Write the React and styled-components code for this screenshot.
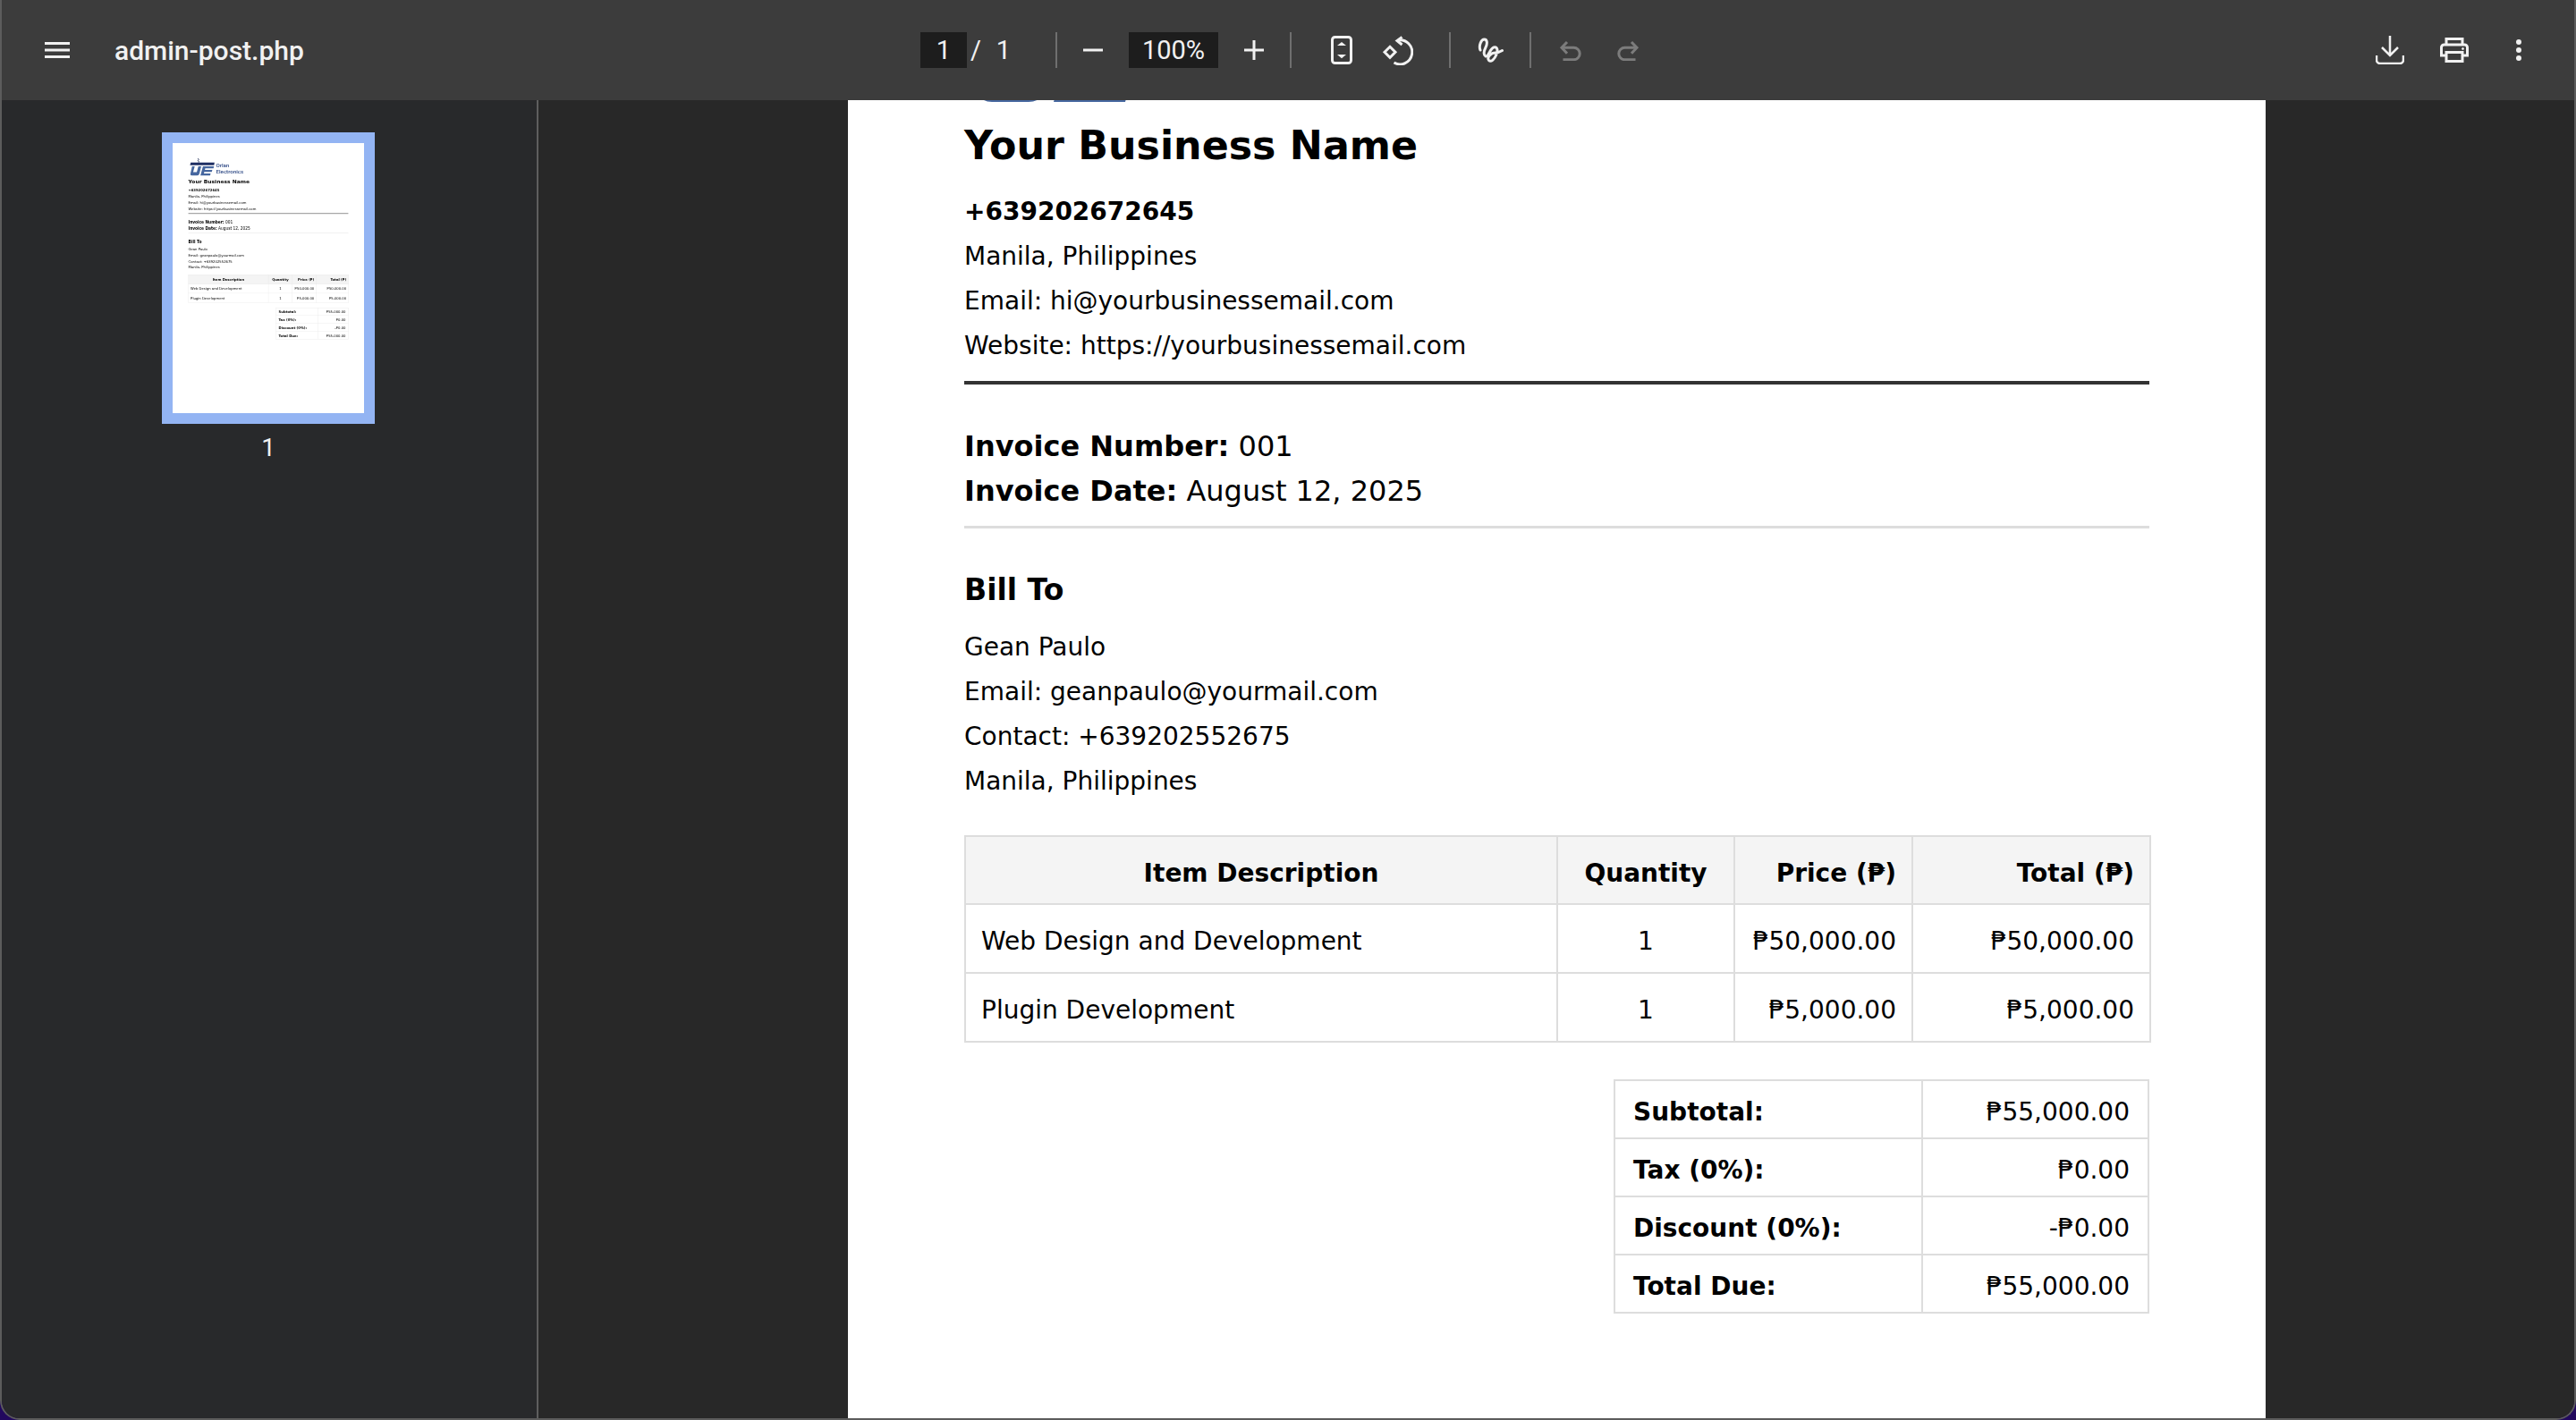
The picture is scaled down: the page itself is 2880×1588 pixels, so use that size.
import styled, { createGlobalStyle } from "styled-components";

const GlobalStyle = createGlobalStyle`
  html, body {
    margin: 0;
    padding: 0;
    background: #22085e;
    overflow: hidden;
  }
  * { box-sizing: border-box; }
`;

const Viewer = styled.div`
  width: 2880px;
  height: 1588px;
  display: flex;
  flex-direction: column;
  overflow: hidden;
  border: 2px solid #5c5c5c;
  border-top: 0;
  border-radius: 0 0 22px 22px;
`;

const Toolbar = styled.header`
  flex: 0 0 112px;
  display: flex;
  align-items: center;
  background: #3c3c3c;
  color: #f1f1f1;
  font-family: Roboto, "Liberation Sans", sans-serif;
`;

const ToolbarLeft = styled.div`
  flex: 0 0 1027px;
  display: flex;
  align-items: center;
  padding-left: 48px;
`;

const Title = styled.span`
  margin-left: 50px;
  font-size: 30px;
  font-weight: 500;
`;

const ToolbarCenter = styled.div`
  display: flex;
  align-items: center;
`;

const ToolbarRight = styled.div`
  margin-left: auto;
  display: flex;
  align-items: center;
  gap: 32px;
  padding-right: 42px;
`;

const ToolGroup = styled.div`
  display: flex;
  align-items: center;
  gap: ${(p) => p.$gap || 0}px;
  padding-left: ${(p) => p.$left || 0}px;
  padding-right: ${(p) => p.$right || 0}px;
`;

const Field = styled.span`
  width: ${(p) => p.$width}px;
  height: 40px;
  display: flex;
  align-items: center;
  justify-content: center;
  background: #1d1d1d;
  font-size: 29px;
`;

const PageText = styled.span`
  font-size: 29px;
  width: ${(p) => p.$width}px;
  text-align: center;
`;

const Divider = styled.span`
  flex: 0 0 2px;
  height: 40px;
  background: #6f6f6f;
`;

const IconButton = styled.span`
  width: 40px;
  height: 40px;
  display: flex;
  align-items: center;
  justify-content: center;
  color: ${(p) => (p.$disabled ? "#7c7c7c" : "#f1f1f1")};
`;

const Body = styled.div`
  flex: 1;
  display: flex;
  min-height: 0;
`;

const Sidebar = styled.aside`
  flex: 0 0 600px;
  display: flex;
  flex-direction: column;
  align-items: center;
  padding: 36px 2px 0 0;
  background: #28292b;
  border-right: 2px solid #5e5e5e;
`;

const ThumbFrame = styled.div`
  width: 238px;
  height: 326px;
  border: 12px solid #93b4f3;
  background: #fff;
  overflow: hidden;
`;

const ThumbScale = styled.div`
  width: 1585px;
  transform: scale(0.135);
  transform-origin: top left;
  filter: blur(2.5px);
`;

const ThumbLabel = styled.div`
  margin-top: 10px;
  color: #f1f1f1;
  font-family: Roboto, "Liberation Sans", sans-serif;
  font-size: 28px;
`;

const Main = styled.main`
  flex: 1;
  min-width: 0;
  overflow: hidden;
  background: #282828;
  padding-left: 346px;
`;

const MainPage = styled.div`
  width: 1585px;
  margin-top: -268px;
`;

const Page = styled.article`
  width: 1585px;
  height: 2240px;
  background: #fff;
  color: #000;
  padding: 126px 130px 0;
  font-family: "DejaVu Sans", Verdana, sans-serif;
  font-size: 28px;
  line-height: 50px;
`;

const Logo = styled.div`
  display: flex;
  height: 144px;
`;

const LogoText = styled.div`
  padding-top: 36px;
  color: #2f4a86;
  font-family: Roboto, "Liberation Sans", sans-serif;
  font-size: 46px;
  font-weight: 500;
  line-height: 50px;
`;

const BusinessName = styled.h1`
  margin: 22px 0 22px;
  font-size: 44.3px;
  line-height: 54px;
  font-weight: 700;
`;

const Line = styled.p`
  margin: 0;
  font-size: ${(p) => p.$size || 28}px;
  font-weight: ${(p) => (p.$bold ? 700 : 400)};
`;

const Rule = styled.hr`
  margin: ${(p) => p.$top}px 0 ${(p) => p.$bottom}px;
  border: 0;
  height: ${(p) => p.$size}px;
  background: ${(p) => p.$color};
`;

const Subheading = styled.h2`
  margin: 0 0 19px;
  font-size: 33px;
  line-height: 40px;
  font-weight: 700;
`;

const Table = styled.table`
  border-collapse: collapse;
  table-layout: fixed;
  width: ${(p) => p.$width}px;
  margin: ${(p) => p.$top}px 0 0 auto;
`;

const HeadCell = styled.th`
  width: ${(p) => p.$width || "auto"};
  height: 76px;
  padding: 8px 17px 0;
  border: 2px solid #ddd;
  background: #f4f4f4;
  font-weight: 700;
  text-align: ${(p) => p.$align || "center"};
`;

const Cell = styled.td`
  height: ${(p) => p.$height || 77}px;
  padding: 6px ${(p) => p.$pad || 17}px 0;
  border: 2px solid #ddd;
  font-weight: ${(p) => (p.$bold ? 700 : 400)};
  text-align: ${(p) => p.$align || "left"};
  width: ${(p) => p.$width || "auto"};
`;

const items = [
  { name: "Web Design and Development", qty: 1, price: "₱50,000.00", total: "₱50,000.00" },
  { name: "Plugin Development", qty: 1, price: "₱5,000.00", total: "₱5,000.00" },
];

const totals = [
  { label: "Subtotal:", value: "₱55,000.00" },
  { label: "Tax (0%):", value: "₱0.00" },
  { label: "Discount (0%):", value: "-₱0.00" },
  { label: "Total Due:", value: "₱55,000.00" },
];

function LogoMark() {
  return (
    <svg width="229" height="144" viewBox="0 0 229 144">
      <path d="M80 2l6 8-6 8 6 8v8" fill="none" stroke="#16224f" strokeWidth="7" />
      <path d="M20 36h197l-4 22H14z" fill="#1f2f63" />
      <path d="M31 66h22l-13 48h30l13-48h24l-15 60q-4 18-20 18H31q-17 0-13-18z" fill="#46679f" />
      <path d="M121 66h92l-5 18h-68l-3 12h62l-5 17h-62l-3 13h56l-5 18H100z" fill="#46679f" />
    </svg>
  );
}

function Invoice() {
  return (
    <Page>
      <Logo>
        <LogoMark />
        <LogoText>
          Orlan
          <br />
          Electronics
        </LogoText>
      </Logo>
      <BusinessName>Your Business Name</BusinessName>
      <Line $bold>+639202672645</Line>
      <Line>Manila, Philippines</Line>
      <Line>Email: hi@yourbusinessemail.com</Line>
      <Line>Website: https://yourbusinessemail.com</Line>
      <Rule $top={14} $bottom={44} $size={4} $color="#333" />
      <Line $size={32}>
        <b>Invoice Number:</b> 001
      </Line>
      <Line $size={32}>
        <b>Invoice Date:</b> August 12, 2025
      </Line>
      <Rule $top={14} $bottom={49} $size={3} $color="#ddd" />
      <Subheading>Bill To</Subheading>
      <Line>Gean Paulo</Line>
      <Line>Email: geanpaulo@yourmail.com</Line>
      <Line>Contact: +639202552675</Line>
      <Line>Manila, Philippines</Line>
      <Table $width={1325} $top={35}>
        <thead>
          <tr>
            <HeadCell $width="662px">Item Description</HeadCell>
            <HeadCell $width="198px">Quantity</HeadCell>
            <HeadCell $width="199px" $align="right">Price (₱)</HeadCell>
            <HeadCell $width="266px" $align="right">Total (₱)</HeadCell>
          </tr>
        </thead>
        <tbody>
          {items.map((item) => (
            <tr key={item.name}>
              <Cell>{item.name}</Cell>
              <Cell $align="center">{item.qty}</Cell>
              <Cell $align="right">{item.price}</Cell>
              <Cell $align="right">{item.total}</Cell>
            </tr>
          ))}
        </tbody>
      </Table>
      <Table $width={599} $top={41}>
        <tbody>
          {totals.map((row) => (
            <tr key={row.label}>
              <Cell $height={65} $pad={20} $bold $width="344px">{row.label}</Cell>
              <Cell $height={65} $pad={20} $align="right">{row.value}</Cell>
            </tr>
          ))}
        </tbody>
      </Table>
    </Page>
  );
}

export default function App() {
  return (
    <>
      <GlobalStyle />
      <Viewer>
        <Toolbar>
          <ToolbarLeft>
            <svg width="28" height="18" viewBox="0 0 28 18" fill="currentColor">
              <rect width="28" height="3" />
              <rect y="7.5" width="28" height="3" />
              <rect y="15" width="28" height="3" />
            </svg>
            <Title>admin-post.php</Title>
          </ToolbarLeft>
          <ToolbarCenter>
            <ToolGroup $right={37}>
              <Field $width={52}>1</Field>
              <PageText $width={20}>/</PageText>
              <PageText $width={42}>1</PageText>
            </ToolGroup>
            <Divider />
            <ToolGroup $left={20} $right={20} $gap={20}>
              <IconButton>
                <svg width="22" height="22" viewBox="0 0 22 22" stroke="currentColor" strokeWidth="3">
                  <path d="M0 11h22" />
                </svg>
              </IconButton>
              <Field $width={100}>100%</Field>
              <IconButton>
                <svg width="22" height="22" viewBox="0 0 22 22" stroke="currentColor" strokeWidth="3">
                  <path d="M0 11h22M11 0v22" />
                </svg>
              </IconButton>
            </ToolGroup>
            <Divider />
            <ToolGroup $left={36} $right={38} $gap={22}>
              <IconButton>
                <svg width="24" height="32" viewBox="0 0 24 32">
                  <rect x="1.5" y="1.5" width="21" height="29" rx="3" fill="none" stroke="currentColor" strokeWidth="3" />
                  <path d="M12 7l5 4H7zM12 25.300l-5-4.300h10z" fill="currentColor" />
                </svg>
              </IconButton>
              <IconButton>
                <svg width="36" height="34" viewBox="0 0 36 34" fill="none" stroke="currentColor" strokeWidth="3">
                  <path d="M10 13.300l6 6-6 6-6-6z" />
                  <path d="M19 6A13.500 13.500 0 1 1 14.500 31" />
                  <path d="M23.500 2.500L18 6.500l5.500 4.500" />
                </svg>
              </IconButton>
            </ToolGroup>
            <Divider />
            <ToolGroup $left={24} $right={24}>
              <IconButton>
                <svg width="30" height="30" viewBox="0 0 30 30" fill="none" stroke="currentColor" strokeWidth="3" strokeLinecap="round" strokeLinejoin="round">
                  <path d="M4 15C2 10 5 3 8.500 3C12 3 12 8 10 12C8 16 7 20 10 22C13 23 15 13 19 12C23 11 24 15 22 20C20 25 16 29 13.500 26.500C11 23 16 18 21 18C24 18 26 17 28.500 15.500" />
                </svg>
              </IconButton>
            </ToolGroup>
            <Divider />
            <ToolGroup $left={24} $gap={24}>
              <IconButton $disabled>
                <svg width="26" height="24" viewBox="0 0 26 24" fill="none" stroke="currentColor" strokeWidth="3">
                  <path d="M9 3L3 9.300l6 6.400" />
                  <path d="M3 9.300h13.500a6.700 6.700 0 0 1 0 13.400H4.500" />
                </svg>
              </IconButton>
              <IconButton $disabled>
                <svg width="26" height="24" viewBox="0 0 26 24" fill="none" stroke="currentColor" strokeWidth="3">
                  <path d="M17 3l6 6.300-6 6.400" />
                  <path d="M23 9.300H9.500a6.700 6.700 0 0 0 0 13.400h12" />
                </svg>
              </IconButton>
            </ToolGroup>
          </ToolbarCenter>
          <ToolbarRight>
            <IconButton>
              <svg width="32" height="32" viewBox="0 0 32 32" fill="none" stroke="currentColor" strokeWidth="2.500">
                <path d="M16 0v21M7 13l9 9 9-9" />
                <path d="M1 22v5a4 4 0 0 0 4 4h22a4 4 0 0 0 4-4v-5" />
              </svg>
            </IconButton>
            <IconButton>
              <svg width="32" height="28" viewBox="0 0 32 28" fill="none" stroke="currentColor" strokeWidth="3">
                <path d="M7 8V1.500h18V8" />
                <path d="M7 20H1.500V11a3 3 0 0 1 3-3h23a3 3 0 0 1 3 3v9H25" />
                <path d="M7 16.500h18v10H7z" />
                <circle cx="25.500" cy="12.500" r="1" fill="currentColor" strokeWidth="1" />
              </svg>
            </IconButton>
            <IconButton>
              <svg width="6" height="24" viewBox="0 0 6 24" fill="currentColor">
                <circle cx="3" cy="3" r="3" />
                <circle cx="3" cy="12" r="3" />
                <circle cx="3" cy="21" r="3" />
              </svg>
            </IconButton>
          </ToolbarRight>
        </Toolbar>
        <Body>
          <Sidebar>
            <ThumbFrame>
              <ThumbScale>
                <Invoice />
              </ThumbScale>
            </ThumbFrame>
            <ThumbLabel>1</ThumbLabel>
          </Sidebar>
          <Main>
            <MainPage>
              <Invoice />
            </MainPage>
          </Main>
        </Body>
      </Viewer>
    </>
  );
}
